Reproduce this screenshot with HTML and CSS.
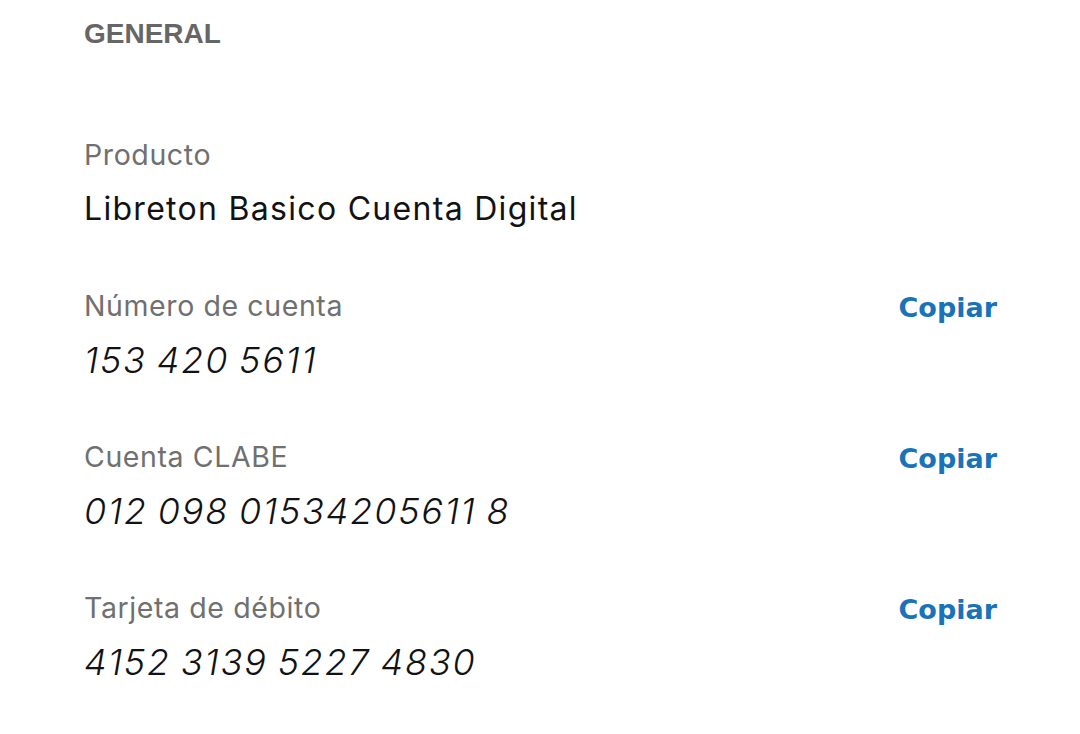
FILE: index.html
```html
<!DOCTYPE html>
<html lang="es">
<head>
<meta charset="utf-8">
<link rel="stylesheet" href="styles.css">
</head>
<body>
<main class="panel">
  <h2 class="section-title">GENERAL</h2>
  <div class="field field-first">
    <div class="field-head">
      <span class="label">Producto</span>
    </div>
    <div class="value">Libreton Basico Cuenta Digital</div>
  </div>
  <div class="field">
    <div class="field-head">
      <span class="label">Número de cuenta</span>
      <span class="copy">Copiar</span>
    </div>
    <div class="value mono">153 420 5611</div>
  </div>
  <div class="field">
    <div class="field-head">
      <span class="label">Cuenta CLABE</span>
      <span class="copy">Copiar</span>
    </div>
    <div class="value mono">012 098 01534205611 8</div>
  </div>
  <div class="field">
    <div class="field-head">
      <span class="label">Tarjeta de débito</span>
      <span class="copy">Copiar</span>
    </div>
    <div class="value mono">4152 3139 5227 4830</div>
  </div>
</main>
</body>
</html>
```
FILE: styles.css
```css
html, body {
  margin: 0;
  padding: 0;
  background: #ffffff;
}
body {
  font-family: Inter, Lato, sans-serif;
  width: 1080px;
  height: 734px;
  overflow: hidden;
}
.panel {
  padding: 14px 83px 0 84px;
  display: flex;
  flex-direction: column;
}
.section-title {
  margin: 0;
  font-family: "Liberation Sans", Arial, sans-serif;
  font-size: 28px;
  line-height: 40px;
  font-weight: 700;
  color: #666666;
}
.field {
  display: flex;
  flex-direction: column;
  gap: 19px;
  margin-top: 60px;
}
.field-first {
  margin-top: 82px;
}
.field-head {
  display: flex;
  justify-content: space-between;
  align-items: center;
  height: 36px;
}
.label {
  font-size: 28.5px;
  letter-spacing: 0.6px;
  color: #707070;
  font-weight: 400;
}
.copy {
  font-family: "DejaVu Sans", Verdana, sans-serif;
  font-size: 27px;
  font-weight: 700;
  color: #1973b8;
  position: relative;
  top: 2px;
}
.value {
  font-size: 32px;
  letter-spacing: 1.3px;
  line-height: 36px;
  color: #121212;
}
.mono {
  font-style: italic;
  font-size: 36px;
  font-weight: 300;
  letter-spacing: 1.8px;
  word-spacing: -2px;
}
```
